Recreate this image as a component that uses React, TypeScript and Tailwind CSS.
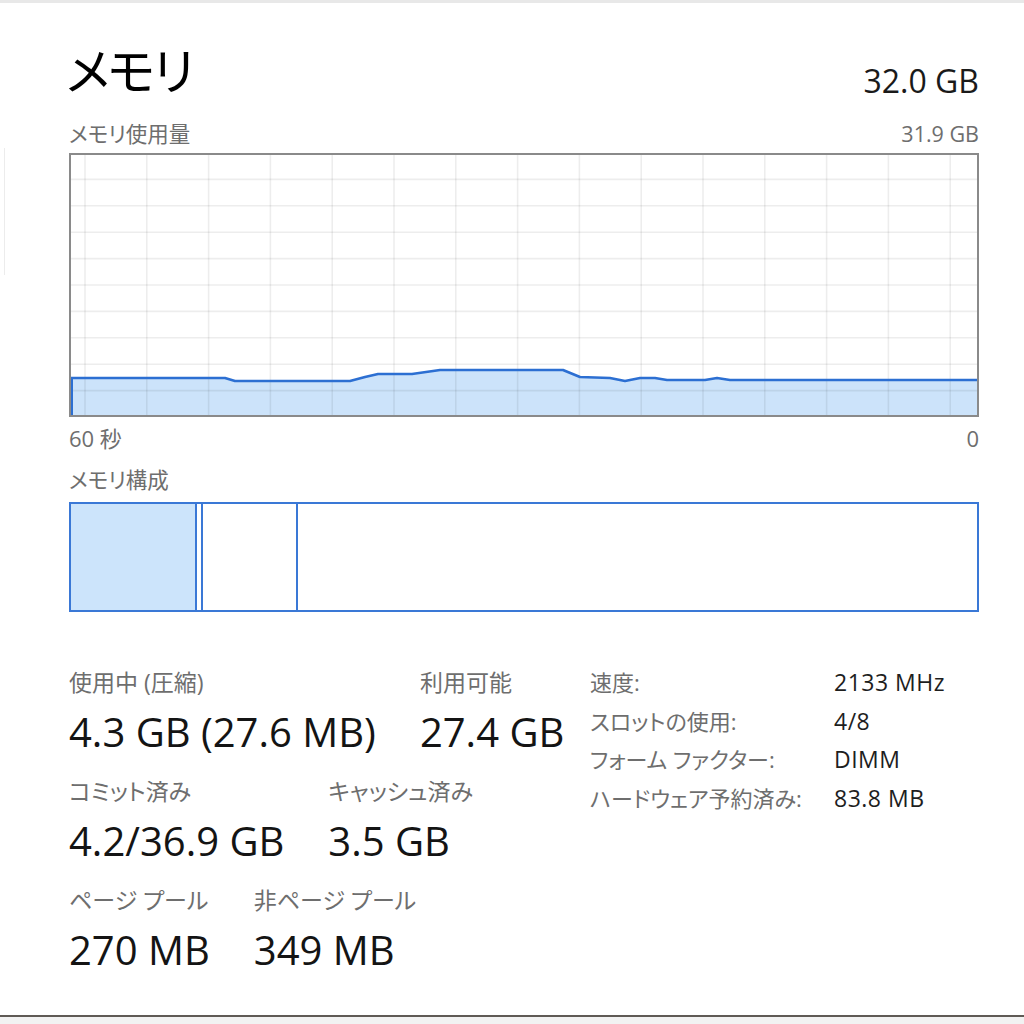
import React from 'react';

const FONT = "font-['Open_Sans','Noto_Sans_CJK_JP',sans-serif] [font-feature-settings:'palt']";

// memory usage trace, in chart-inner coordinates (906 x 260)
const trace: [number, number][] = [
  [0, 223], [154, 223], [164, 226], [279, 226], [294, 222], [307, 219], [341, 219],
  [369, 215], [492, 215], [509, 222], [539, 223], [554, 226], [569, 223], [584, 223],
  [596, 225], [634, 225], [646, 223], [659, 225], [906, 225],
];

const MemoryChart: React.FC = () => {
  const pts = trace.map(([x, y]) => `${x},${y}`).join(' ');
  const vlines = Array.from({ length: 15 }, (_, i) => 14 + i * 61.8);
  const hlines = Array.from({ length: 9 }, (_, i) => -2 + (i + 1) * 26.4);
  return (
    <div className="w-[910px] h-[264px] border-2 border-[#8a8a8a] bg-white">
      <svg width="906" height="260" viewBox="0 0 906 260" className="block">
        <polygon points={`${pts} 906,260 0,260`} fill="#cce3fa" />
        {vlines.map((x) => (
          <line key={`v${x}`} x1={x} y1={0} x2={x} y2={260} stroke="rgba(0,0,0,0.07)" strokeWidth="1.6" />
        ))}
        {hlines.map((y) => (
          <line key={`h${y}`} x1={0} y1={y} x2={906} y2={y} stroke="rgba(0,0,0,0.07)" strokeWidth="1.6" />
        ))}
        <polyline points={pts} fill="none" stroke="#2c6fd2" strokeWidth="2.6" strokeLinejoin="round" />
        <line x1="1" y1="223" x2="1" y2="260" stroke="#2c6fd2" strokeWidth="2" />
      </svg>
    </div>
  );
};

const CompositionBar: React.FC = () => (
  <div className="w-[910px] h-[110px] border-2 border-[#3a78d6] flex">
    <div className="w-[126px] bg-[#cce4fb] border-r-2 border-[#3a78d6]" />
    <div className="w-[6px] border-r-2 border-[#3a78d6]" />
    <div className="w-[95px] border-r-2 border-[#3a78d6]" />
    <div className="flex-1" />
  </div>
);

const Stat: React.FC<{ label: string; value: string }> = ({ label, value }) => (
  <div className="flex flex-col">
    <div className="text-[23px] leading-[28px] text-[#6e6e6e] whitespace-nowrap">{label}</div>
    <div className="mt-[14px] text-[40px] leading-[44px] text-[#141414] whitespace-nowrap">{value}</div>
  </div>
);

const details = [
  ['速度:', '2133 MHz'],
  ['スロットの使用:', '4/8'],
  ['フォーム ファクター:', 'DIMM'],
  ['ハードウェア予約済み:', '83.8 MB'],
];

export default function App() {
  return (
    <div className={`w-[1024px] h-[1024px] bg-white flex flex-col overflow-hidden ${FONT}`}>
      <div className="h-[3px] bg-[#e8e8e8]" />
      <div className="flex flex-1">
        <div className="w-[69px]">
          <div className="mt-[145px] ml-[4px] w-[1px] h-[127px] bg-[#ececec]" />
        </div>

        <div className="w-[910px] flex flex-col">
          {/* header */}
          <div className="mt-[38px] flex justify-between items-start">
            <div className="text-[50px] leading-[60px] tracking-[-2px] text-black -ml-[3px]">メモリ</div>
            <div className="mt-[20px] text-[32px] leading-[40px] text-[#1a1a1a]">32.0 GB</div>
          </div>

          <div className="mt-[21px] flex justify-between text-[21.5px] leading-[24px] text-[#6e6e6e]">
            <span>メモリ使用量</span>
            <span>31.9 GB</span>
          </div>

          <div className="mt-[7px]">
            <MemoryChart />
          </div>

          <div className="mt-[9px] flex justify-between text-[22px] leading-[24px] text-[#6e6e6e]">
            <span>60 秒</span>
            <span>0</span>
          </div>

          <div className="mt-[18px] text-[21.5px] leading-[24px] text-[#6e6e6e]">メモリ構成</div>

          <div className="mt-[10px]">
            <CompositionBar />
          </div>

          {/* stats */}
          <div className="mt-[51px] flex items-start">
            <div className="w-[521px] pt-[5px] flex flex-col gap-[23px]">
              <div className="flex gap-[44px]">
                <Stat label="使用中 (圧縮)" value="4.3 GB (27.6 MB)" />
                <Stat label="利用可能" value="27.4 GB" />
              </div>
              <div className="flex gap-[44px]">
                <Stat label="コミット済み" value="4.2/36.9 GB" />
                <Stat label="キャッシュ済み" value="3.5 GB" />
              </div>
              <div className="flex gap-[44px]">
                <Stat label="ページ プール" value="270 MB" />
                <Stat label="非ページ プール" value="349 MB" />
              </div>
            </div>

            <div className="grid grid-cols-[244px_auto] leading-[38.5px] whitespace-nowrap">
              {details.map(([k, v]) => (
                <React.Fragment key={k}>
                  <div className="text-[22px] text-[#6e6e6e]">{k}</div>
                  <div className="text-[23px] tracking-[0.5px] text-[#1e1e1e]">{v}</div>
                </React.Fragment>
              ))}
            </div>
          </div>
        </div>
      </div>
      <div className="h-[2px] bg-[#5f5a55]" />
      <div className="h-[7px] bg-[#f2f2f2]" />
    </div>
  );
}
